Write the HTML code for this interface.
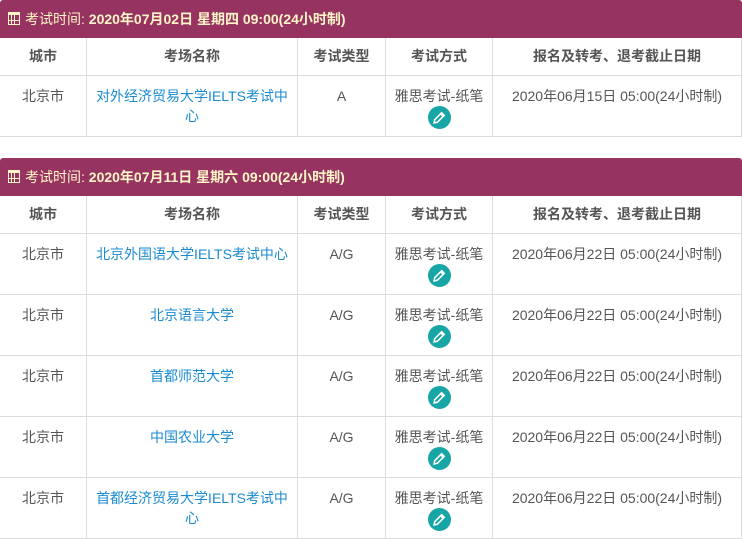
<!DOCTYPE html>
<html><head><meta charset="utf-8"><style>
*{margin:0;padding:0;box-sizing:border-box}
body{width:742px;height:538px;background:#fff;font-family:"Liberation Sans","Noto Sans CJK SC",sans-serif;font-size:14px;color:#555;overflow:hidden;position:relative}
.blk{position:absolute;left:0;width:742px}
.bar{height:38px;background:#973360;color:#fff6c8;font-weight:bold;font-size:14px;line-height:38px;padding-left:8px;border-radius:3px 3px 0 0}
.bar span{font-weight:normal}
.cal{display:inline-block;width:12px;height:13px;vertical-align:-1px;margin-right:5px;border:1.5px solid #fff6c8;border-top-width:3px;background:
linear-gradient(90deg,transparent 2px,#fff6c8 2px,#fff6c8 3px,transparent 3px,transparent 5px,#fff6c8 5px,#fff6c8 6px,transparent 6px),
linear-gradient(0deg,transparent 3px,#fff6c8 3px,#fff6c8 4px,transparent 4px)}
.r{display:flex;border-bottom:1px solid #ddd;height:61px}
.r>div{border-right:1px solid #ddd;text-align:center;padding-top:10px;line-height:20px}
.r>div:last-child{border-right:1px solid #ddd}
.h{height:38px}
.h>div{padding-top:0;line-height:37px;font-weight:bold}
.c1{width:87px}.c2{width:211px}.c3{width:88px}.c4{width:107px}.c5{width:249px}
.l{color:#1b8bd0}
.p{display:inline-block;width:23px;height:23px;border-radius:50%;background:#17a5a5;vertical-align:top;position:relative}
.p svg{position:absolute;left:5px;top:5px}
</style></head><body>
<div class="blk" style="top:0">
<div class="bar"><i class="cal"></i><span>考试时间: </span>2020年07月02日 星期四 09:00(24小时制)</div>
<div class="r h"><div class="c1">城市</div><div class="c2">考场名称</div><div class="c3">考试类型</div><div class="c4">考试方式</div><div class="c5">报名及转考、退考截止日期</div></div>
<div class="r"><div class="c1">北京市</div><div class="c2 l">对外经济贸易大学IELTS考试中<br>心</div><div class="c3">A</div><div class="c4">雅思考试-纸笔<br><span class="p"><svg width="13" height="13" viewBox="0 0 12 12"><path d="M1 11l.6-3L8 1.6l2.4 2.4L4 10.4z M7 2.6l2.4 2.4" fill="none" stroke="#fff" stroke-width="1.4"/></svg></span></div><div class="c5">2020年06月15日 05:00(24小时制)</div></div>
</div>
<div class="blk" style="top:158px">
<div class="bar"><i class="cal"></i><span>考试时间: </span>2020年07月11日 星期六 09:00(24小时制)</div>
<div class="r h"><div class="c1">城市</div><div class="c2">考场名称</div><div class="c3">考试类型</div><div class="c4">考试方式</div><div class="c5">报名及转考、退考截止日期</div></div>
<div class="r"><div class="c1">北京市</div><div class="c2 l">北京外国语大学IELTS考试中心</div><div class="c3">A/G</div><div class="c4">雅思考试-纸笔<br><span class="p"><svg width="13" height="13" viewBox="0 0 12 12"><path d="M1 11l.6-3L8 1.6l2.4 2.4L4 10.4z M7 2.6l2.4 2.4" fill="none" stroke="#fff" stroke-width="1.4"/></svg></span></div><div class="c5">2020年06月22日 05:00(24小时制)</div></div>
<div class="r"><div class="c1">北京市</div><div class="c2 l">北京语言大学</div><div class="c3">A/G</div><div class="c4">雅思考试-纸笔<br><span class="p"><svg width="13" height="13" viewBox="0 0 12 12"><path d="M1 11l.6-3L8 1.6l2.4 2.4L4 10.4z M7 2.6l2.4 2.4" fill="none" stroke="#fff" stroke-width="1.4"/></svg></span></div><div class="c5">2020年06月22日 05:00(24小时制)</div></div>
<div class="r"><div class="c1">北京市</div><div class="c2 l">首都师范大学</div><div class="c3">A/G</div><div class="c4">雅思考试-纸笔<br><span class="p"><svg width="13" height="13" viewBox="0 0 12 12"><path d="M1 11l.6-3L8 1.6l2.4 2.4L4 10.4z M7 2.6l2.4 2.4" fill="none" stroke="#fff" stroke-width="1.4"/></svg></span></div><div class="c5">2020年06月22日 05:00(24小时制)</div></div>
<div class="r"><div class="c1">北京市</div><div class="c2 l">中国农业大学</div><div class="c3">A/G</div><div class="c4">雅思考试-纸笔<br><span class="p"><svg width="13" height="13" viewBox="0 0 12 12"><path d="M1 11l.6-3L8 1.6l2.4 2.4L4 10.4z M7 2.6l2.4 2.4" fill="none" stroke="#fff" stroke-width="1.4"/></svg></span></div><div class="c5">2020年06月22日 05:00(24小时制)</div></div>
<div class="r"><div class="c1">北京市</div><div class="c2 l">首都经济贸易大学IELTS考试中<br>心</div><div class="c3">A/G</div><div class="c4">雅思考试-纸笔<br><span class="p"><svg width="13" height="13" viewBox="0 0 12 12"><path d="M1 11l.6-3L8 1.6l2.4 2.4L4 10.4z M7 2.6l2.4 2.4" fill="none" stroke="#fff" stroke-width="1.4"/></svg></span></div><div class="c5">2020年06月22日 05:00(24小时制)</div></div>
</div>
</body></html>
